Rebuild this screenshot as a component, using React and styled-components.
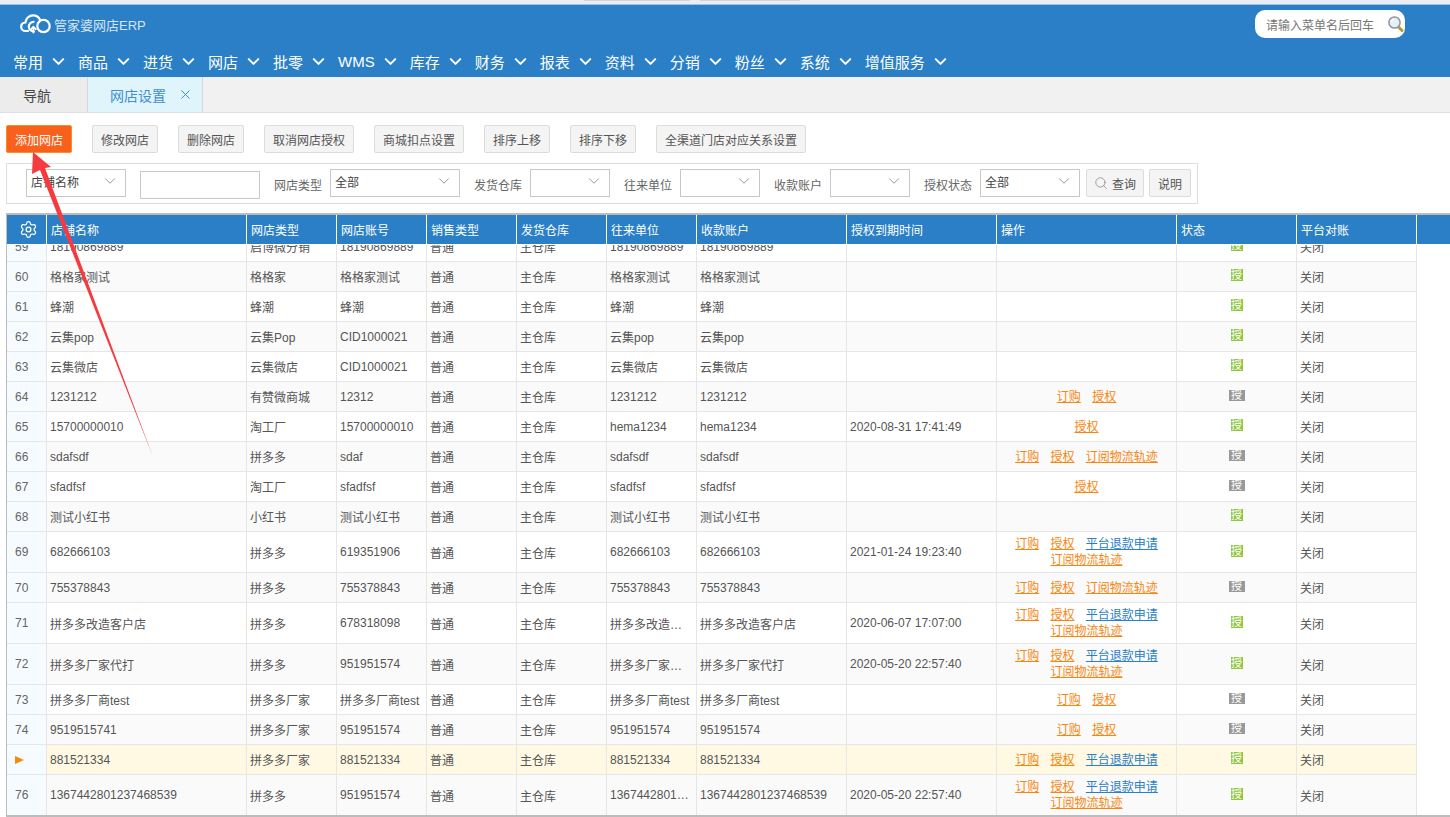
import React from "react";
import styled, { createGlobalStyle } from "styled-components";
import { ChevronDown, Search, Settings, X } from "lucide-react";

const GlobalStyle = createGlobalStyle`
  html, body {
    margin: 0;
    padding: 0;
    height: 100%;
    overflow: hidden;
    background: #ffffff;
    font-family: "Liberation Sans", "Noto Sans CJK SC", sans-serif;
    font-size: 12px;
    color: #555555;
  }
`;

const Page = styled.div`
  position: relative;
  width: 1450px;
  height: 817px;
  overflow: hidden;
  background: #ffffff;
`;

const TopStrip = styled.div`
  height: 5px;
  background: #e9edf6;
  border-bottom: 1px solid #9cc3e3;
  box-sizing: border-box;
  display: flex;
  padding-left: 584px;
  gap: 10px;
`;

const StripTab = styled.div`
  width: ${(props) => props.$w}px;
  height: 1px;
  background: #cfd3da;
`;

const Header = styled.div`
  height: 72px;
  background: #2a7fc6;
  display: flex;
  flex-direction: column;
`;

const HeaderTop = styled.div`
  height: 37px;
  display: flex;
  align-items: flex-start;
  justify-content: space-between;
  padding: 5px 45px 0 20px;
`;

const Logo = styled.div`
  display: flex;
  align-items: center;
  gap: 3px;
  height: 28px;
  color: #d5e6f4;
  font-size: 13px;
`;

const MenuSearch = styled.div`
  width: 150px;
  height: 28px;
  box-sizing: border-box;
  padding: 0 0 0 11px;
  background: #ffffff;
  border-radius: 10px;
  display: flex;
  align-items: center;
  justify-content: space-between;
  color: #777777;
`;

const Nav = styled.div`
  display: flex;
  align-items: center;
  height: 32px;
  padding-left: 13px;
`;

const NavItem = styled.div`
  display: flex;
  align-items: center;
  gap: 6px;
  margin-right: 10px;
  color: #ffffff;
  font-size: 15px;
  white-space: nowrap;
`;

const TabBar = styled.div`
  height: 36px;
  box-sizing: border-box;
  background: #f1f1f1;
  border-bottom: 1px solid #e0e0e0;
  display: flex;
`;

const Tab = styled.div`
  display: flex;
  align-items: center;
  gap: 12px;
  box-sizing: border-box;
  width: ${(props) => (props.$active ? "115px" : "88px")};
  padding-left: ${(props) => (props.$active ? "22px" : "23px")};
  background: ${(props) => (props.$active ? "#e0f4fc" : "#ececec")};
  color: ${(props) => (props.$active ? "#3d8fd1" : "#444444")};
  border-right: 1px solid #d8d8d8;
  font-size: 14px;
`;

const Toolbar = styled.div`
  display: flex;
  gap: 20px;
  padding: 12px 0 0 6px;
  height: 28px;
`;

const ToolButton = styled.div`
  height: 28px;
  box-sizing: border-box;
  padding: 0 8px;
  display: flex;
  align-items: center;
  border-radius: 2px;
  border: 1px solid ${(props) => (props.$primary ? "#f5921e" : "#dcdcdc")};
  background: ${(props) => (props.$primary ? "#f9601c" : "#f4f4f4")};
  color: ${(props) => (props.$primary ? "#ffffff" : "#555555")};
  white-space: nowrap;
`;

const FilterBar = styled.div`
  width: 1192px;
  height: 41px;
  box-sizing: border-box;
  margin: 10px 0 0 6px;
  padding: 5px 0 0 19px;
  border: 1px solid #dedede;
  display: flex;
  align-items: flex-start;
`;

const SelectBox = styled.div`
  width: ${(props) => props.$w}px;
  height: 28px;
  box-sizing: border-box;
  margin-right: ${(props) => props.$mr || 14}px;
  padding: 0 6px 4px 4px;
  border: 1px solid #c8c8c8;
  display: flex;
  align-items: center;
  justify-content: space-between;
  color: #444444;
  flex-shrink: 0;
`;

const TextInput = styled.div`
  width: 120px;
  height: 28px;
  box-sizing: border-box;
  margin: 2px 14px 0 0;
  border: 1px solid #c8c8c8;
  flex-shrink: 0;
`;

const FilterLabel = styled.div`
  width: 48px;
  margin: 9px 8px 0 0;
  line-height: 16px;
  color: #666666;
  white-space: nowrap;
  flex-shrink: 0;
`;

const FilterButton = styled.div`
  height: 28px;
  box-sizing: border-box;
  margin-left: ${(props) => props.$ml}px;
  width: ${(props) => props.$w}px;
  display: flex;
  align-items: center;
  justify-content: center;
  gap: 4px;
  border: 1px solid #dcdcdc;
  background: #f4f4f4;
  border-radius: 2px;
  color: #555555;
  flex-shrink: 0;
`;

const TableWrap = styled.div`
  margin: 9px 0 0 6px;
  height: 604px;
  box-sizing: border-box;
  border-top: 2px solid #bcbcbc;
  border-bottom: 2px solid #bcbcbc;
  position: relative;
  width: 1444px;
`;

const LeftRule = styled.div`
  position: absolute;
  left: 0;
  top: 0;
  bottom: 0;
  width: 1px;
  background: #bcbcbc;
`;

const HeadRow = styled.div`
  display: flex;
  height: 30px;
  margin-left: 1px;
  background: #2a7fc6;
  border-bottom: 1px solid #ffffff;
  box-sizing: border-box;
`;

const HeadCell = styled.div`
  width: ${(props) => props.$w}px;
  box-sizing: border-box;
  flex-shrink: 0;
  padding-left: 4px;
  border-right: 1px solid #ffffff;
  color: #ffffff;
  display: flex;
  align-items: center;
  justify-content: ${(props) => (props.$center ? "center" : "flex-start")};
`;

const BodyClip = styled.div`
  height: 570px;
  margin-left: 1px;
  overflow: hidden;
`;

const Grid = styled.table`
  margin-top: -13px;
  border-collapse: separate;
  border-spacing: 0;
  table-layout: fixed;
  width: 1410px;
`;

const Row = styled.tr`
  height: ${(props) => (props.$tall ? 41 : 30)}px;
  background: ${(props) =>
    props.$current ? "#fff9e4" : props.$even ? "#fafafa" : "#ffffff"};
`;

const Cell = styled.td`
  box-sizing: border-box;
  padding: 0 3px;
  border-right: 1px solid #e6e6e6;
  border-bottom: 1px solid #e6e6e6;
  color: #555555;
  white-space: nowrap;
  overflow: hidden;
  text-overflow: ellipsis;
`;

const NumCell = styled(Cell)`
  background: #f5fbff;
  padding-left: 8px;
  color: #666666;
`;

const OpCell = styled(Cell)`
  white-space: normal;
  text-align: center;
  line-height: 16px;
`;

const CenterCell = styled(Cell)`
  text-align: center;
`;

const OpLink = styled.a`
  margin: 0 4px;
  color: ${(props) => (props.$blue ? "#2a7fc6" : "#f7860f")};
  text-decoration: underline;
  white-space: nowrap;
`;

const AuthBadge = styled.span`
  display: inline-block;
  width: ${(props) => (props.$off ? 16 : 12)}px;
  height: ${(props) => (props.$off ? 11 : 12)}px;
  line-height: ${(props) => (props.$off ? 11 : 12)}px;
  font-size: 11px;
  text-align: center;
  overflow: hidden;
  color: #ffffff;
  background: ${(props) => (props.$off ? "#999999" : "#8fc73e")};
`;

const CurrentMark = styled.span`
  display: inline-block;
  border-left: 9px solid #f58a0b;
  border-top: 4px solid transparent;
  border-bottom: 4px solid transparent;
`;

const ArrowLayer = styled.svg`
  position: absolute;
  left: 0;
  top: 0;
  pointer-events: none;
`;

const navItems = ["常用", "商品", "进货", "网店", "批零", "WMS", "库存", "财务", "报表", "资料", "分销", "粉丝", "系统", "增值服务"];
const toolButtons = ["修改网店", "删除网店", "取消网店授权", "商城扣点设置", "排序上移", "排序下移", "全渠道门店对应关系设置"];

const columns = [
  { title: "店铺名称", w: 200 },
  { title: "网店类型", w: 90 },
  { title: "网店账号", w: 90 },
  { title: "销售类型", w: 90 },
  { title: "发货仓库", w: 90 },
  { title: "往来单位", w: 90 },
  { title: "收款账户", w: 150 },
  { title: "授权到期时间", w: 150 },
  { title: "操作", w: 180 },
  { title: "状态", w: 120 },
  { title: "平台对账", w: 120 },
];

const BUY = { t: "订购" };
const AUTH = { t: "授权" };
const TRACK = { t: "订阅物流轨迹" };
const REFUND = { t: "平台退款申请", blue: true };

const rows = [
  { no: 59, name: "18190869889", type: "启博微分销", acct: "18190869889", unit: "18190869889", pay: "18190869889", ops: [] },
  { no: 60, name: "格格家测试", type: "格格家", acct: "格格家测试", unit: "格格家测试", pay: "格格家测试", ops: [] },
  { no: 61, name: "蜂潮", type: "蜂潮", acct: "蜂潮", unit: "蜂潮", pay: "蜂潮", ops: [] },
  { no: 62, name: "云集pop", type: "云集Pop", acct: "CID1000021", unit: "云集pop", pay: "云集pop", ops: [] },
  { no: 63, name: "云集微店", type: "云集微店", acct: "CID1000021", unit: "云集微店", pay: "云集微店", ops: [] },
  { no: 64, name: "1231212", type: "有赞微商城", acct: "12312", unit: "1231212", pay: "1231212", ops: [BUY, AUTH], off: true },
  { no: 65, name: "15700000010", type: "淘工厂", acct: "15700000010", unit: "hema1234", pay: "hema1234", expire: "2020-08-31 17:41:49", ops: [AUTH] },
  { no: 66, name: "sdafsdf", type: "拼多多", acct: "sdaf", unit: "sdafsdf", pay: "sdafsdf", ops: [BUY, AUTH, TRACK], off: true },
  { no: 67, name: "sfadfsf", type: "淘工厂", acct: "sfadfsf", unit: "sfadfsf", pay: "sfadfsf", ops: [AUTH], off: true },
  { no: 68, name: "测试小红书", type: "小红书", acct: "测试小红书", unit: "测试小红书", pay: "测试小红书", ops: [] },
  { no: 69, name: "682666103", type: "拼多多", acct: "619351906", unit: "682666103", pay: "682666103", expire: "2021-01-24 19:23:40", ops: [BUY, AUTH, REFUND, TRACK], tall: true },
  { no: 70, name: "755378843", type: "拼多多", acct: "755378843", unit: "755378843", pay: "755378843", ops: [BUY, AUTH, TRACK], off: true },
  { no: 71, name: "拼多多改造客户店", type: "拼多多", acct: "678318098", unit: "拼多多改造客户店", pay: "拼多多改造客户店", expire: "2020-06-07 17:07:00", ops: [BUY, AUTH, REFUND, TRACK], tall: true },
  { no: 72, name: "拼多多厂家代打", type: "拼多多", acct: "951951574", unit: "拼多多厂家代打", pay: "拼多多厂家代打", expire: "2020-05-20 22:57:40", ops: [BUY, AUTH, REFUND, TRACK], tall: true },
  { no: 73, name: "拼多多厂商test", type: "拼多多厂家", acct: "拼多多厂商test", unit: "拼多多厂商test", pay: "拼多多厂商test", ops: [BUY, AUTH], off: true },
  { no: 74, name: "9519515741", type: "拼多多厂家", acct: "951951574", unit: "951951574", pay: "951951574", ops: [BUY, AUTH], off: true },
  { no: 75, name: "881521334", type: "拼多多厂家", acct: "881521334", unit: "881521334", pay: "881521334", ops: [BUY, AUTH, REFUND], current: true },
  { no: 76, name: "1367442801237468539", type: "拼多多", acct: "951951574", unit: "1367442801237468539", pay: "1367442801237468539", expire: "2020-05-20 22:57:40", ops: [BUY, AUTH, REFUND, TRACK], tall: true },
];

function CloudLogo() {
  return (
    <svg width="31" height="20" viewBox="0 0 31 20" fill="none" stroke="#ffffff" strokeWidth="2.2" strokeLinecap="round">
      <path d="M8 17H5.5C3 17 1.2 15 1.2 12.7C1.2 10.3 3 8.6 5.4 8.5C6 4.2 9.4 1.3 13 1.3C16.4 1.3 19 3.4 20.2 6" />
      <path d="M14 17.5C11 17.5 8.8 15.2 8.8 12.6C8.8 10 11 7.8 13.6 7.8" />
      <circle cx="23.5" cy="12" r="6.2" />
      <path d="M13.4 18.5V13M11 15.2L13.4 12.8L15.8 15.2" strokeWidth="1.8" />
    </svg>
  );
}

function Magnifier() {
  return (
    <svg width="18" height="18" viewBox="0 0 18 18">
      <path d="M10.5 11L15 15.5" stroke="#b79a2c" strokeWidth="3" strokeLinecap="round" />
      <circle cx="7.5" cy="7.5" r="5.6" fill="#e6eff8" stroke="#8d949b" strokeWidth="1.5" />
      <path d="M4.5 7C4.8 5.5 5.8 4.6 7.2 4.3" stroke="#ffffff" strokeWidth="1.2" fill="none" />
    </svg>
  );
}

function Filter({ label, w, value, mr }) {
  return (
    <>
      {label && <FilterLabel>{label}</FilterLabel>}
      <SelectBox $w={w} $mr={mr}>
        <span>{value}</span>
        <ChevronDown size={18} strokeWidth={0.9} color="#666666" />
      </SelectBox>
    </>
  );
}

export default function App() {
  return (
    <Page>
      <GlobalStyle />
      <TopStrip>
        <StripTab $w={106} />
        <StripTab $w={100} />
      </TopStrip>
      <Header>
        <HeaderTop>
          <Logo>
            <CloudLogo />
            <span>管家婆网店ERP</span>
          </Logo>
          <MenuSearch>
            <span>请输入菜单名后回车</span>
            <Magnifier />
          </MenuSearch>
        </HeaderTop>
        <Nav>
          {navItems.map((item) => (
            <NavItem key={item}>
              {item}
              <ChevronDown size={19} strokeWidth={2.6} />
            </NavItem>
          ))}
        </Nav>
      </Header>
      <TabBar>
        <Tab>导航</Tab>
        <Tab $active>
          网店设置
          <X size={15} strokeWidth={1.6} />
        </Tab>
      </TabBar>
      <Toolbar>
        <ToolButton $primary>添加网店</ToolButton>
        {toolButtons.map((label) => (
          <ToolButton key={label}>{label}</ToolButton>
        ))}
      </Toolbar>
      <FilterBar>
        <Filter w={100} value="店铺名称" />
        <TextInput />
        <Filter label="网店类型" w={130} value="全部" />
        <Filter label="发货仓库" w={80} />
        <Filter label="往来单位" w={80} />
        <Filter label="收款账户" w={80} />
        <Filter label="授权状态" w={100} value="全部" mr={1} />
        <FilterButton $ml={5} $w={58}>
          <Search size={14} strokeWidth={1} color="#666666" />
          查询
        </FilterButton>
        <FilterButton $ml={5} $w={42}>说明</FilterButton>
      </FilterBar>
      <TableWrap>
        <LeftRule />
        <HeadRow>
          <HeadCell $w={40} $center>
            <Settings size={19} strokeWidth={1.6} />
          </HeadCell>
          {columns.map((col) => (
            <HeadCell key={col.title} $w={col.w}>{col.title}</HeadCell>
          ))}
        </HeadRow>
        <BodyClip>
          <Grid>
            <colgroup>
              <col width="40" />
              {columns.map((col) => (
                <col key={col.title} width={col.w} />
              ))}
            </colgroup>
            <tbody>
              {rows.map((row) => (
                <Row key={row.no} $tall={row.tall} $even={row.no % 2 === 0} $current={row.current}>
                  <NumCell>{row.current ? <CurrentMark /> : row.no}</NumCell>
                  <Cell>{row.name}</Cell>
                  <Cell>{row.type}</Cell>
                  <Cell>{row.acct}</Cell>
                  <Cell>普通</Cell>
                  <Cell>主仓库</Cell>
                  <Cell>{row.unit}</Cell>
                  <Cell>{row.pay}</Cell>
                  <Cell>{row.expire}</Cell>
                  <OpCell>
                    {row.ops.map((op) => (
                      <React.Fragment key={op.t}>
                        <OpLink $blue={op.blue}>{op.t}</OpLink>{" "}
                      </React.Fragment>
                    ))}
                  </OpCell>
                  <CenterCell>
                    <AuthBadge $off={row.off}>授</AuthBadge>
                  </CenterCell>
                  <Cell>关闭</Cell>
                </Row>
              ))}
            </tbody>
          </Grid>
        </BodyClip>
      </TableWrap>
      <ArrowLayer width="200" height="470" viewBox="0 0 200 470">
        <polygon points="33,152 51,167 45,168 153,457 40,170 32,174" fill="#f63b3f" />
      </ArrowLayer>
    </Page>
  );
}
